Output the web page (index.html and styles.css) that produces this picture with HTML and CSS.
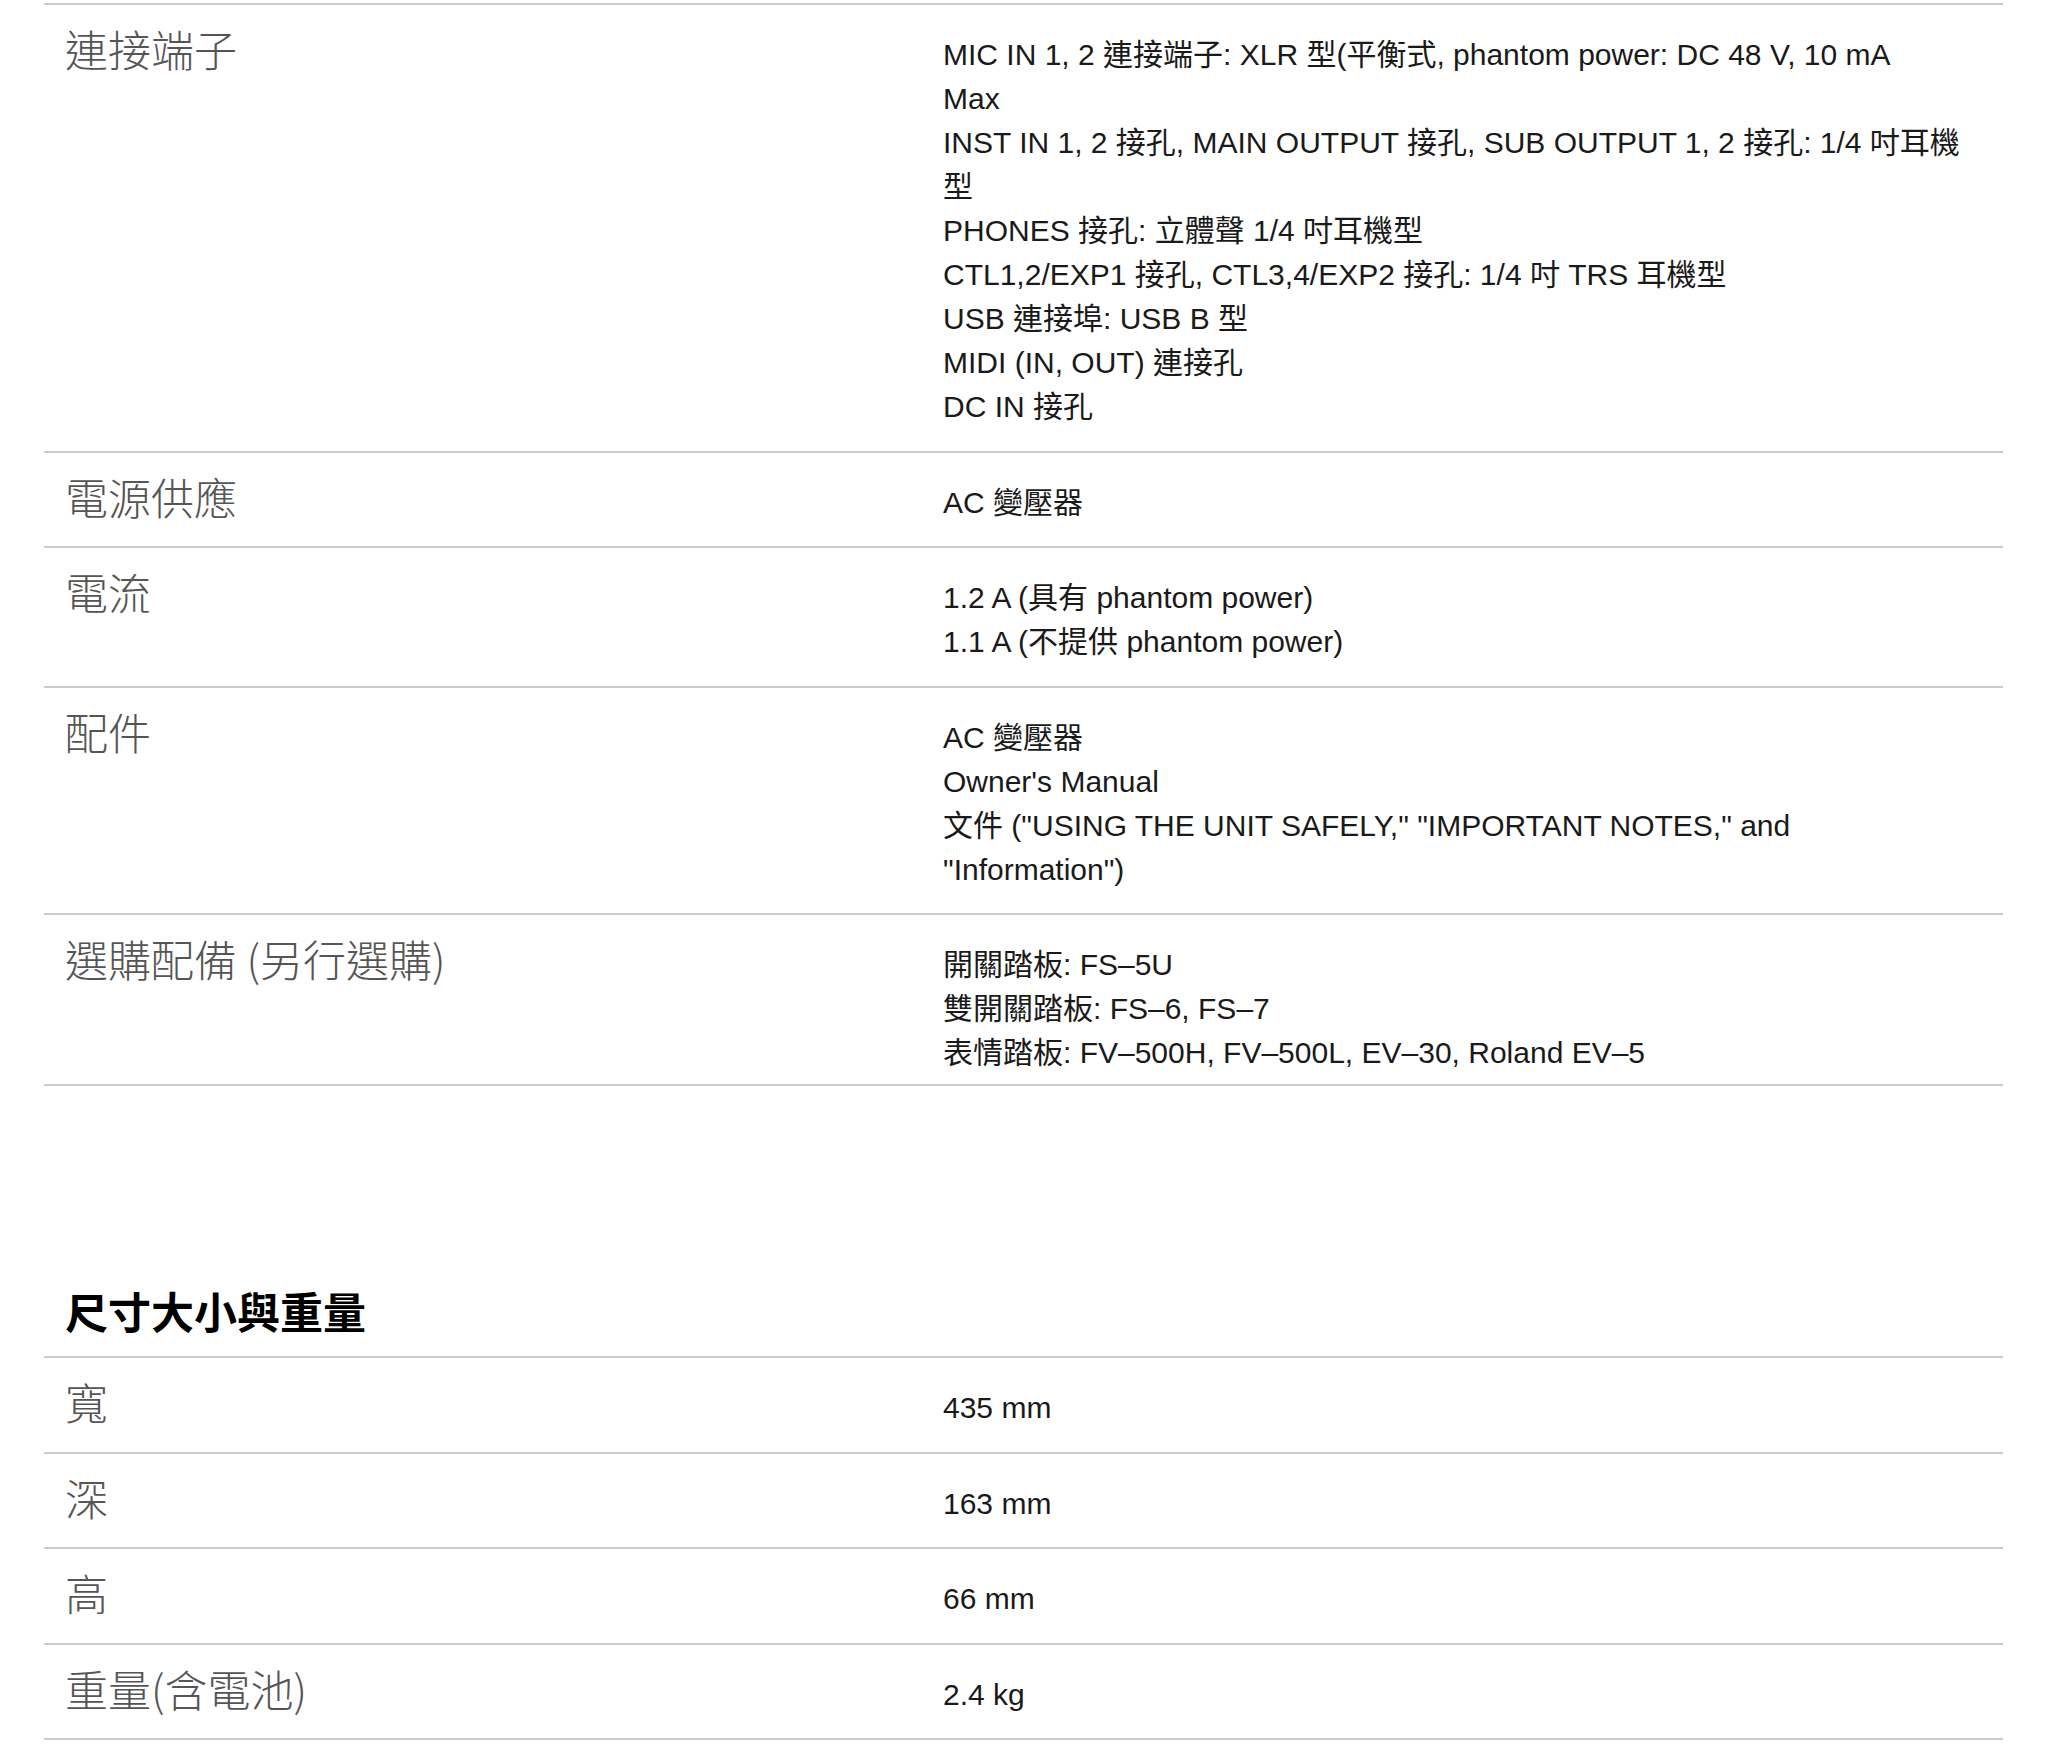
FILE: index.html
```html
<!DOCTYPE html>
<html lang="zh-Hant">
<head>
<meta charset="utf-8">
<title>規格</title>
<link rel="stylesheet" href="styles.css">
</head>
<body>
<main class="specs">
  <section class="spec-table spec-table--first">
    <div class="spec-row">
      <div class="spec-label">連接端子</div>
      <div class="spec-value">
        <div>MIC IN 1, 2 連接端子: XLR 型(平衡式, phantom power: DC 48 V, 10 mA<br>Max</div>
        <div>INST IN 1, 2 接孔, MAIN OUTPUT 接孔, SUB OUTPUT 1, 2 接孔: 1/4 吋耳機型</div>
        <div>PHONES 接孔: 立體聲 1/4 吋耳機型</div>
        <div>CTL1,2/EXP1 接孔, CTL3,4/EXP2 接孔: 1/4 吋 TRS 耳機型</div>
        <div>USB 連接埠: USB B 型</div>
        <div>MIDI (IN, OUT) 連接孔</div>
        <div>DC IN 接孔</div>
      </div>
    </div>
    <div class="spec-row">
      <div class="spec-label">電源供應</div>
      <div class="spec-value"><div>AC 變壓器</div></div>
    </div>
    <div class="spec-row">
      <div class="spec-label">電流</div>
      <div class="spec-value">
        <div>1.2 A (具有 phantom power)</div>
        <div>1.1 A (不提供 phantom power)</div>
      </div>
    </div>
    <div class="spec-row">
      <div class="spec-label">配件</div>
      <div class="spec-value">
        <div>AC 變壓器</div>
        <div>Owner's Manual</div>
        <div>文件 ("USING THE UNIT SAFELY," "IMPORTANT NOTES," and "Information")</div>
      </div>
    </div>
    <div class="spec-row spec-row--last">
      <div class="spec-label">選購配備 (另行選購)</div>
      <div class="spec-value">
        <div>開關踏板: FS–5U</div>
        <div>雙開關踏板: FS–6, FS–7</div>
        <div>表情踏板: FV–500H, FV–500L, EV–30, Roland EV–5</div>
      </div>
    </div>
  </section>

  <h2 class="section-title">尺寸大小與重量</h2>

  <section class="spec-table">
    <div class="spec-row">
      <div class="spec-label">寬</div>
      <div class="spec-value"><div>435 mm</div></div>
    </div>
    <div class="spec-row">
      <div class="spec-label">深</div>
      <div class="spec-value"><div>163 mm</div></div>
    </div>
    <div class="spec-row">
      <div class="spec-label">高</div>
      <div class="spec-value"><div>66 mm</div></div>
    </div>
    <div class="spec-row">
      <div class="spec-label">重量(含電池)</div>
      <div class="spec-value"><div>2.4 kg</div></div>
    </div>
  </section>
</main>
</body>
</html>
```

FILE: styles.css
```css
html, body {
  margin: 0;
  padding: 0;
  background: #ffffff;
}

body {
  font-family: "Liberation Sans", "Noto Sans CJK TC", sans-serif;
  color: #1a1a1a;
}

.specs {
  padding: 3px 45px 0 44px;
}

.spec-table {
  border-top: 2px solid #cccccc;
}

.spec-row {
  display: grid;
  grid-template-columns: 899px 1fr;
  padding: 28px 0 21.5px;
  border-bottom: 2px solid #cccccc;
}

.spec-row--last {
  padding-bottom: 9px;
}

.spec-label {
  padding-left: 21px;
  font-family: "Noto Sans CJK TC", "Liberation Sans", sans-serif;
  font-size: 43px;
  font-weight: 300;
  line-height: 30px;
  color: #555555;
}

.spec-value {
  padding-right: 42px;
  font-size: 30px;
  line-height: 44px;
  color: #1a1a1a;
}

.section-title {
  margin: 199px 0 0;
  padding: 0 0 21px 21px;
  font-family: "Noto Sans CJK TC", "Liberation Sans", sans-serif;
  font-size: 43px;
  font-weight: 700;
  line-height: 50px;
  color: #000000;
}
```
